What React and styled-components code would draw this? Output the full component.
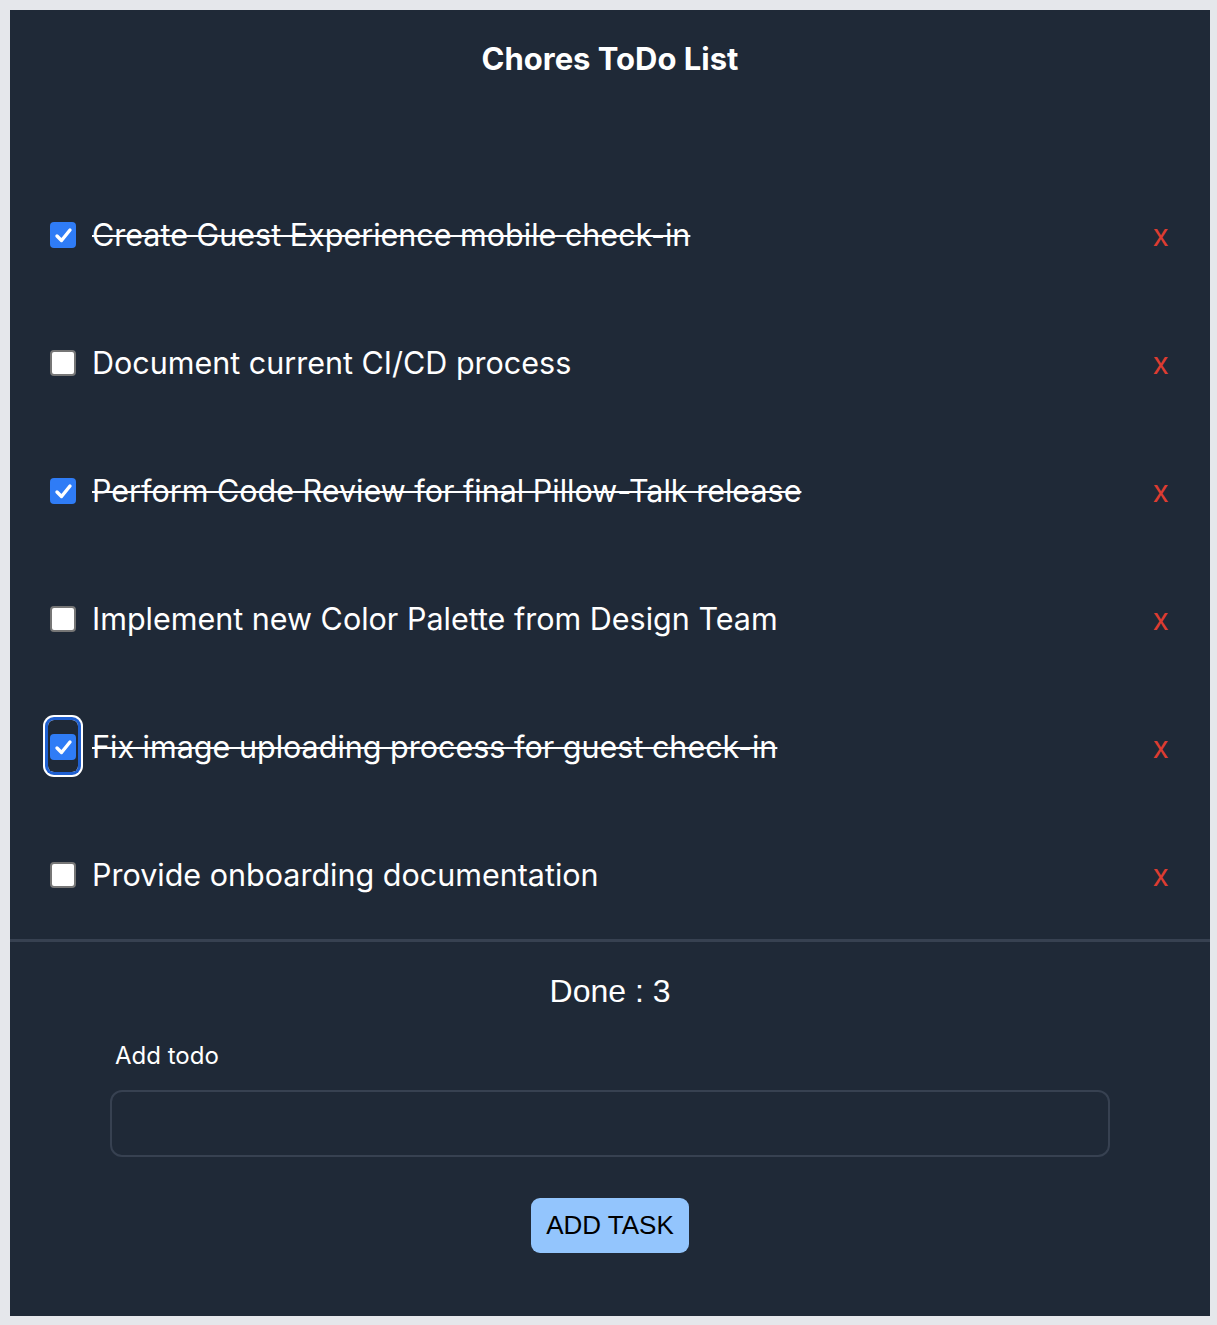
import styled, { createGlobalStyle } from "styled-components"

const GlobalStyle = createGlobalStyle`
    body {
        margin: 0;
        padding: 10px;
        background: #e5e7eb;
        font-family: Inter, "Noto Sans", sans-serif;
    }
`
const Panel = styled.div`
    background: #1f2937;
    width: 1200px;
    height: 1306px;
    display: flex;
    flex-direction: column;
    color: #fff;
`
const Title = styled.h1`
    margin: 0;
    padding-top: 31px;
    font-size: 31px;
    line-height: 36px;
    font-weight: 700;
    text-align: center;
`
const List = styled.ul`
    list-style: none;
    margin: 94px 0 0 0;
    padding: 0;
`
const Row = styled.li`
    height: 128px;
    display: flex;
    align-items: center;
    padding: 0 41px 0 38px;
`
const CheckFrame = styled.span`
    width: 30px;
    height: 52px;
    margin-top: -3px;
    display: flex;
    align-items: center;
    justify-content: center;
    border-radius: 6px;
    flex-shrink: 0;
    box-shadow: ${props => props.$focused ? "0 0 0 3px #1f5fd0, 0 0 0 5px #fff" : "none"};

    & > span {
        margin-top: 3px;
    }
`
const Box = styled.span`
    width: 26px;
    height: 26px;
    box-sizing: border-box;
    border-radius: 4px;
    display: flex;
    align-items: center;
    justify-content: center;
    background: ${props => props.$checked ? "#2f7cf6" : "#fff"};
    border: ${props => props.$checked ? "none" : "2px solid #767676"};
`
const TaskText = styled.span`
    flex: 1;
    margin-left: 14px;
    font-size: 30.5px;
    line-height: 36px;
    text-decoration: ${props => props.$done ? "line-through" : "none"};
    text-decoration-thickness: 2px;
`
const Remove = styled.button`
    background: none;
    border: none;
    padding: 0;
    color: #dc3c31;
    font-family: Inter, sans-serif;
    font-size: 30px;
    line-height: 36px;
    cursor: pointer;
`
const Footer = styled.div`
    border-top: 3px solid #374151;
    display: flex;
    flex-direction: column;
    align-items: center;
`
const DoneCount = styled.div`
    margin-top: 31px;
    font-family: "Liberation Sans", Arial, sans-serif;
    font-size: 32px;
    line-height: 36px;
`
const Form = styled.form`
    width: 1000px;
    margin-top: 32px;
    display: flex;
    flex-direction: column;
    align-items: center;

    & label {
        align-self: flex-start;
        margin-left: 5px;
        font-size: 24px;
        line-height: 30px;
    }

    & input {
        width: 100%;
        height: 67px;
        margin-top: 19px;
        box-sizing: border-box;
        background: transparent;
        border: 2px solid #374151;
        border-radius: 12px;
        outline: none;
        color: #fff;
        font-size: 22px;
        padding: 0 16px;
    }
`
const AddButton = styled.button`
    margin-top: 41px;
    width: 158px;
    height: 55px;
    border: none;
    border-radius: 9px;
    background: #93c5fd;
    color: #000;
    font-family: "Liberation Sans", Arial, sans-serif;
    font-size: 26px;
`

const todos = [
    { text: "Create Guest Experience mobile check-in", done: true },
    { text: "Document current CI/CD process", done: false },
    { text: "Perform Code Review for final Pillow-Talk release", done: true },
    { text: "Implement new Color Palette from Design Team", done: false },
    { text: "Fix image uploading process for guest check-in", done: true, focused: true },
    { text: "Provide onboarding documentation", done: false },
]

const Check = ({ checked, focused }) => (
    <CheckFrame $focused={focused}>
        <Box $checked={checked}>
            {checked && (
                <svg width="19" height="19" viewBox="0 0 19 19">
                    <path d="M3 10 L7.5 14.5 L16 4" fill="none" stroke="#fff" strokeWidth="3.4" strokeLinecap="round" strokeLinejoin="round" />
                </svg>
            )}
        </Box>
    </CheckFrame>
)

const App = () => {
    const doneCount = todos.filter(t => t.done).length
    return (
        <>
            <GlobalStyle />
            <Panel>
                <Title>Chores ToDo List</Title>
                <List>
                    {todos.map(t => (
                        <Row key={t.text}>
                            <Check checked={t.done} focused={t.focused} />
                            <TaskText $done={t.done}>{t.text}</TaskText>
                            <Remove>x</Remove>
                        </Row>
                    ))}
                </List>
                <Footer>
                    <DoneCount>Done : {doneCount}</DoneCount>
                    <Form onSubmit={e => e.preventDefault()}>
                        <label htmlFor="todo">Add todo</label>
                        <input id="todo" type="text" />
                        <AddButton type="submit">ADD TASK</AddButton>
                    </Form>
                </Footer>
            </Panel>
        </>
    )
}

export default App
